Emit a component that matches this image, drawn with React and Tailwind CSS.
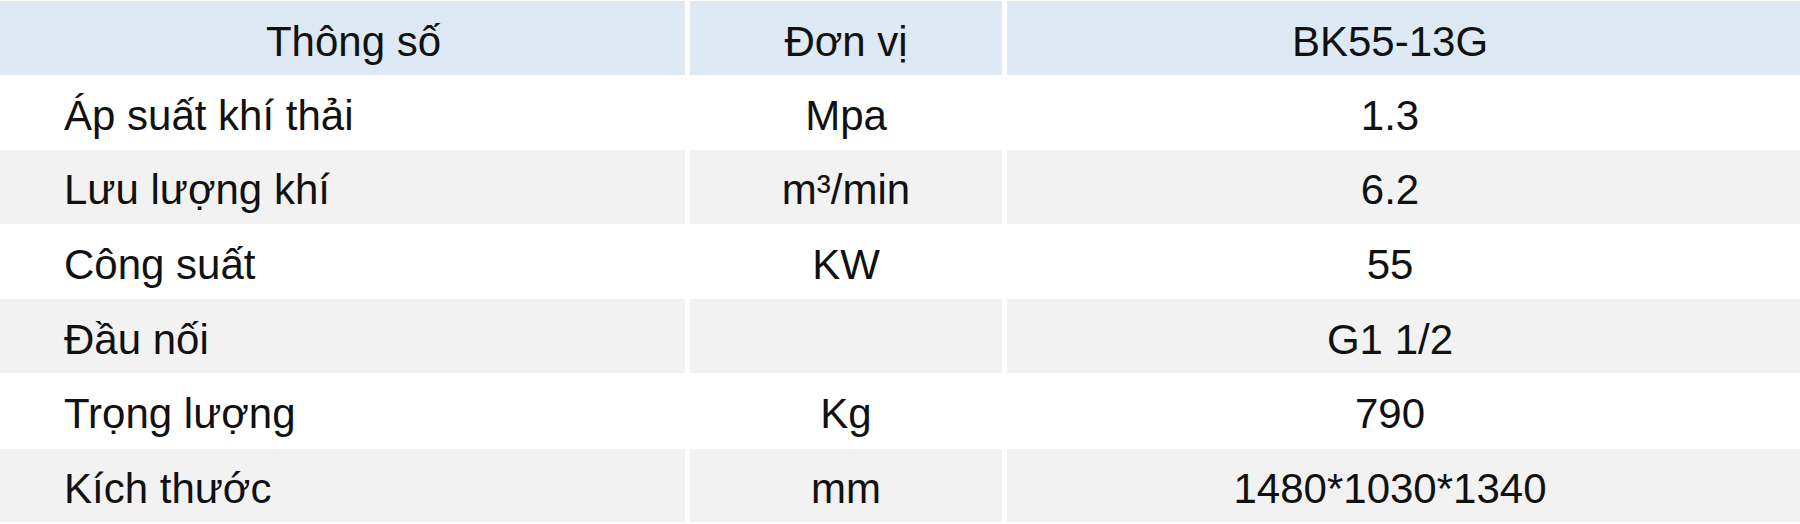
export default function App() {
  const rows = [
    ["Áp suất khí thải", "Mpa", "1.3"],
    ["Lưu lượng khí", "m³/min", "6.2"],
    ["Công suất", "KW", "55"],
    ["Đầu nối", "", "G1 1/2"],
    ["Trọng lượng", "Kg", "790"],
    ["Kích thước", "mm", "1480*1030*1340"],
  ];
  return (
    <div className="w-[1800px] h-[524px] overflow-hidden bg-white pt-px text-[42px] text-[#111]" style={{ fontFamily: '"Liberation Sans", Arial, sans-serif' }}>
      <div className="grid grid-cols-[685px_312px_798px] gap-x-[5px] gap-y-px auto-rows-[73.6px]">
        <div className="bg-[#dde9f5] flex items-center justify-center pl-[22px] pt-[8px]">Thông số</div>
        <div className="bg-[#dde9f5] flex items-center justify-center pt-[8px]">Đơn vị</div>
        <div className="bg-[#dde9f5] flex items-center justify-center pr-[32px] pt-[8px]">BK55-13G</div>
        {rows.map((r, i) => {
          const bg = i % 2 === 0 ? "bg-white" : "bg-[#f2f2f2]";
          return [
            <div key={i + "a"} className={`${bg} flex items-center pl-[64px] pt-[6px]`}>{r[0]}</div>,
            <div key={i + "b"} className={`${bg} flex items-center justify-center pt-[6px]`}>{r[1]}</div>,
            <div key={i + "c"} className={`${bg} flex items-center justify-center pr-[32px] pt-[6px]`}>{r[2]}</div>,
          ];
        })}
      </div>
    </div>
  );
}
